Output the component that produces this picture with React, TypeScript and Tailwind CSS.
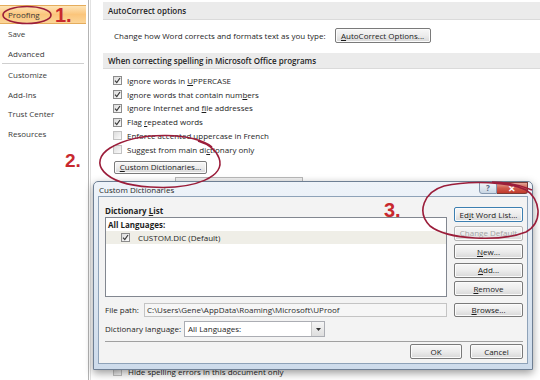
import React from "react";
import clsx from "clsx";

const font = "font-['Open_Sans','Noto_Sans',sans-serif]";

const U = ({ children }: { children: React.ReactNode }) => (
  <span className="underline underline-offset-[1px]">{children}</span>
);

const Check = ({ checked, dim }: { checked?: boolean; dim?: boolean }) => (
  <span
    className={clsx(
      "flex h-[9px] w-[9px] shrink-0 items-center justify-center border bg-linear-to-br from-[#dcdcdc] to-[#fbfbfb]",
      dim ? "border-[#c2c2c2]" : "border-[#8c8c8c]"
    )}
  >
    {checked && (
      <svg width="7" height="7" viewBox="0 0 7 7">
        <path d="M1 3.6 L2.8 5.6 L6 1" fill="none" stroke="#3a3a3a" strokeWidth="1.2" />
      </svg>
    )}
  </span>
);

const Btn = ({
  children,
  className,
  focus,
  disabled,
}: {
  children: React.ReactNode;
  className?: string;
  focus?: boolean;
  disabled?: boolean;
}) => (
  <div
    className={clsx(
      "flex items-center justify-center rounded-[2px] border bg-linear-to-b from-[#f7f7f7] via-[#ececec] to-[#d8d8d8] text-[8px] leading-none shadow-[inset_0_0_0_1px_#fbfbfb]",
      focus ? "border-[#3c7fb1] shadow-[inset_0_0_0_1px_#a8dbf3]" : "border-[#7a7a7a]",
      disabled ? "border-[#b5b5b5] text-[#a5a5a5]" : "text-[#1b1b1b]",
      className
    )}
  >
    {children}
  </div>
);

const SideItem = ({ label, active, h }: { label: string; active?: boolean; h: string }) => (
  <div
    className={clsx(
      "flex items-center pl-[8px]",
      h,
      active &&
        "border-y border-[#e5ac5c] bg-linear-to-b from-[#fde4b6] via-[#fbc57b] to-[#fbd598]"
    )}
  >
    {label}
  </div>
);

const Row = ({ checked, children }: { checked?: boolean; children: React.ReactNode }) => (
  <div className="flex h-[13.75px] items-center gap-[5px] pl-[10px]">
    <Check checked={checked} dim={!checked} />
    <span>{children}</span>
  </div>
);

export default function App() {
  return (
    <div
      className={clsx(
        "relative flex h-[380px] w-[540px] overflow-hidden bg-white text-[8px] text-[#1e1e1e]",
        font
      )}
    >
      {/* left nav */}
      <div className="w-[89px] shrink-0 border-r border-[#b3b3b3] pt-[5px] text-[8px] text-[#3a3a3a]">
        <div className="w-[86px]">
          <SideItem label="Proofing" active h="h-[19px]" />
        </div>
        <SideItem label="Save" h="h-[20px]" />
        <SideItem label="Advanced" h="h-[19px]" />
        <div className="mx-[2px] w-[82px] border-t border-[#cfcfcf]" />
        <SideItem label="Customize" h="h-[21px]" />
        <SideItem label="Add-Ins" h="h-[19px]" />
        <SideItem label="Trust Center" h="h-[20px]" />
        <SideItem label="Resources" h="h-[19px]" />
      </div>

      {/* options page */}
      <div className="ml-[1px] flex flex-1 flex-col border-l border-[#e2e2e2] pl-[12px]">
        <div className="mt-[2px] flex h-[18px] items-center border-b border-[#dadada] bg-[#ebebeb] pl-[5px] font-semibold">
          AutoCorrect options
        </div>
        <div className="mt-[8px] flex h-[15px] items-center pl-[11px]">
          <span>Change how Word corrects and formats text as you type:</span>
          <Btn className="ml-[9px] h-[15px] w-[96px]">
            <U>A</U>utoCorrect Options...
          </Btn>
        </div>
        <div className="mt-[10px] flex h-[16px] items-center border-b border-[#dadada] bg-[#ebebeb] pl-[5px] font-semibold">
          When correcting spelling in Microsoft Office programs
        </div>
        <div className="mt-[5px] flex flex-col">
          <Row checked>
            Ignore words in <U>U</U>PPERCASE
          </Row>
          <Row checked>
            Ignore words that contain num<U>b</U>ers
          </Row>
          <Row checked>
            Ignore Internet and <U>f</U>ile addresses
          </Row>
          <Row checked>
            Flag <U>r</U>epeated words
          </Row>
          <Row>Enforce accented uppercase in French</Row>
          <Row>
            Suggest from main di<U>c</U>tionary only
          </Row>
        </div>
        <Btn className="ml-[11px] mt-[4px] h-[13px] w-[93px]">
          <U>C</U>ustom Dictionaries...
        </Btn>
        <div className="ml-[72px] mt-[3px] h-[12px] w-[128px] border border-[#b9b9b9] bg-[#f1f1f1]" />
        <div className="h-[176px]" />
        <div className="flex h-[14px] items-center gap-[6px] pl-[10px]">
          <Check dim />
          <span>Hide spelling errors in this document only</span>
        </div>
      </div>

      {/* Custom Dictionaries dialog */}
      <div className="absolute left-[93px] top-[181px] flex h-[189px] w-[440px] flex-col rounded-t-[5px] border border-[#6e7f94] bg-linear-to-b from-[#eef3f9] via-[#dfe8f2] to-[#cddbeb] px-[4px] pb-[5px] shadow-[0_3px_8px_rgba(0,0,0,0.4)]">
        <div className="flex h-[15px] items-start">
          <span className="pl-[1px] pt-[3px] text-[8px] leading-[10px] text-[#2a2a2a]">
            Custom Dictionaries
          </span>
          <div className="ml-auto flex">
            <div className="flex h-[12px] w-[18px] items-center justify-center rounded-bl-[3px] border border-[#8497ae] bg-linear-to-b from-[#f2f6fa] to-[#c9d6e4] text-[8px] font-bold leading-none text-[#556680]">
              ?
            </div>
            <div className="flex h-[12px] w-[31px] items-center justify-center rounded-br-[3px] border border-l-0 border-[#7a3b35] bg-linear-to-b from-[#e3a497] via-[#cf5a4b] to-[#c0392b] text-[9px] font-bold leading-none text-white">
              ✕
            </div>
          </div>
        </div>
        <div className="flex flex-1 flex-col border border-[#8ea2b8] bg-[#f3f3f3] pb-[4px] pl-[6px] pr-[4px] pt-[8px]">
          <div className="grid grid-cols-[342px_69px] gap-x-[7px]">
            <div className="flex flex-col">
              <div className="h-[12px] font-bold leading-[11px]">
                Dictionary <U>L</U>ist
              </div>
              <div className="flex h-[80px] flex-col border border-[#828790] bg-white pt-[1px]">
                <div className="flex h-[11px] items-center pl-[2px] font-bold">All Languages:</div>
                <div className="mt-[1px] flex h-[13px] items-center bg-[#efeee7] pl-[15px]">
                  <Check checked />
                  <span className="ml-[8px]">CUSTOM.DIC (Default)</span>
                </div>
              </div>
            </div>
            <div className="flex flex-col gap-[3.5px] pt-[2px]">
              <Btn focus className="h-[15px]">
                Ed<U>i</U>t Word List...
              </Btn>
              <Btn disabled className="h-[15px]">
                Change Default
              </Btn>
              <Btn className="h-[15px]">
                <U>N</U>ew...
              </Btn>
              <Btn className="h-[15px]">
                <U>A</U>dd...
              </Btn>
              <Btn className="h-[15px]">
                <U>R</U>emove
              </Btn>
            </div>
          </div>

          <div className="mt-[6px] grid grid-cols-[342px_69px] gap-x-[7px]">
            <div className="flex h-[14px] items-center">
              <span className="w-[39px]">File path:</span>
              <div className="flex h-[14px] flex-1 items-center border border-[#c4c4c4] bg-[#f6f6f6] pl-[2px] text-[#2b2b2b]">
                C:\Users\Gene\AppData\Roaming\Microsoft\UProof
              </div>
            </div>
            <Btn className="h-[14px]">
              <U>B</U>rowse...
            </Btn>
          </div>

          <div className="mt-[4px] flex h-[16px] items-center">
            <span className="w-[79px]">Dictionary language:</span>
            <div className="flex h-[16px] w-[141px] items-center border border-[#abadb3] bg-white">
              <span className="flex-1 pl-[3px]">All Languages:</span>
              <div className="flex h-full w-[13px] items-center justify-center border-l border-[#c7c7c7] bg-linear-to-b from-[#f5f5f5] to-[#dedede]">
                <svg width="5" height="3" viewBox="0 0 5 3">
                  <path d="M0 0 H5 L2.5 3 Z" fill="#333" />
                </svg>
              </div>
            </div>
          </div>

          <div className="mt-[4px] h-[2px] border-t border-[#a0a0a0] border-b-white" />

          <div className="mt-[1px] flex justify-end gap-[8px]">
            <Btn className="h-[15px] w-[52px]">OK</Btn>
            <Btn className="h-[15px] w-[53px]">Cancel</Btn>
          </div>
        </div>
      </div>

      {/* red annotations */}
      <svg className="pointer-events-none absolute left-0 top-0" width="540" height="380" viewBox="0 0 540 380">
        <g fill="none" stroke="#9b1d3a" strokeWidth="1.6">
          <ellipse cx="27" cy="15" rx="24" ry="8.5" />
          <path d="M212 147 C196 133 140 130 110 148 C88 162 102 184 150 187 C196 190 226 176 219 158 C216 150 208 144 198 141" />
          <path d="M444 186 C424 192 416 212 430 226 C448 240 500 242 526 232 C544 222 540 198 526 190 C510 182 470 180 444 186 M492 182 C506 182 520 185 532 190" />
        </g>
      </svg>
      <span className="absolute left-[55px] top-[5px] font-['Liberation_Sans',sans-serif] text-[20px] font-bold leading-[20px] text-[#c8282e]">
        1.
      </span>
      <span className="absolute left-[65px] top-[151px] font-['Liberation_Sans',sans-serif] text-[19px] font-bold leading-[19px] text-[#c8282e]">
        2.
      </span>
      <span className="absolute left-[384px] top-[200px] font-['Liberation_Sans',sans-serif] text-[20px] font-bold leading-[20px] text-[#c8282e]">
        3.
      </span>
    </div>
  );
}
